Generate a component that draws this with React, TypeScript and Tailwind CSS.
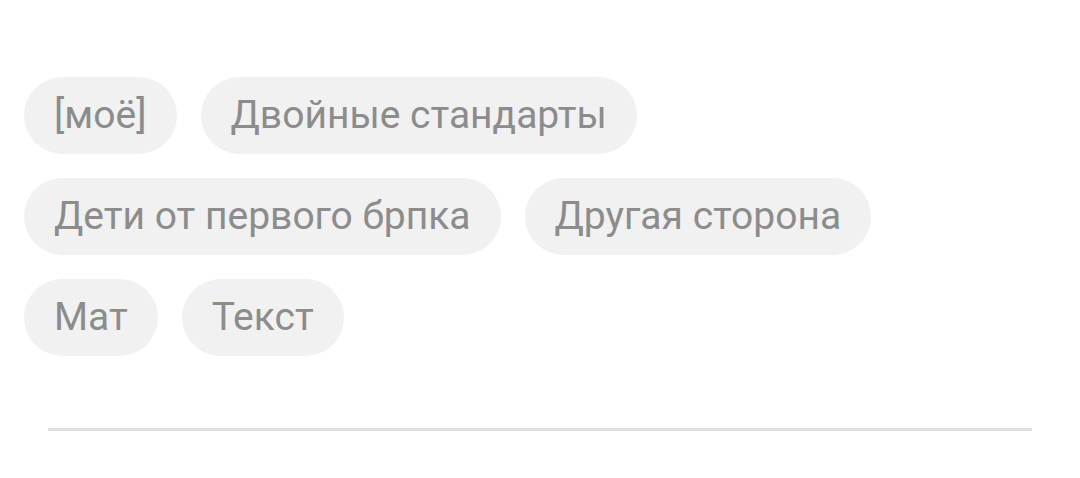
import React from 'react';

const tags = ['[моё]', 'Двойные стандарты', 'Дети от первого брпка', 'Другая сторона', 'Мат', 'Текст'];

const Tag: React.FC<{ label: string }> = ({ label }) => (
  <span className="flex h-[77px] items-center rounded-full bg-[#f1f1f1] px-[30px] text-[39px] leading-none text-[#8c8c8c]">
    {label}
  </span>
);

export default function App() {
  return (
    <div className="min-h-[478px] w-[1080px] bg-white font-['Roboto',sans-serif]">
      <div className="pl-6 pt-[77px]">
        <div className="flex w-[960px] flex-wrap gap-x-6 gap-y-[24px]">
          {tags.map((t) => (
            <Tag key={t} label={t} />
          ))}
        </div>
      </div>
      <div className="mx-12 mt-[72px] h-[3px] bg-[#e0e0e0]" />
    </div>
  );
}
